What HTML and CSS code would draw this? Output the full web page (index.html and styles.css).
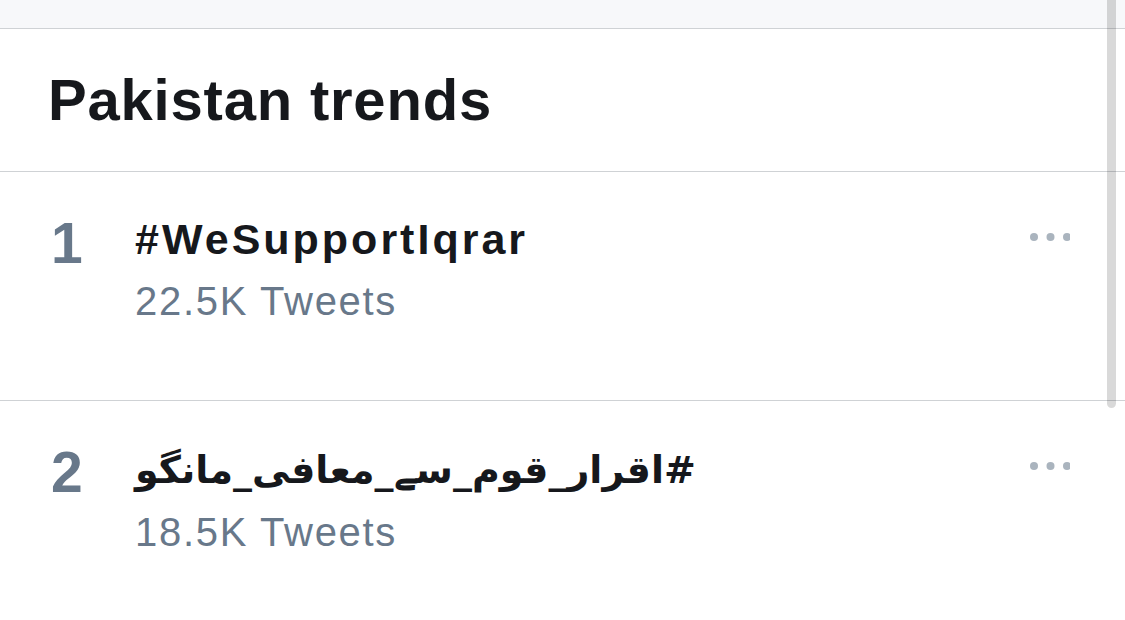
FILE: index.html
```html
<!DOCTYPE html>
<html>
<head>
    <meta charset="utf-8" />
    <title>Pakistan trends</title>
    <link rel="stylesheet" href="styles.css">
</head>
<body>
    <div class="Page">
        <div class="TopBar"></div>
        <div class="Header">
            <h1 class="Title">Pakistan trends</h1>
        </div>
        <div class="Trend">
            <div class="Rank">1</div>
            <div class="Info">
                <div class="Tag">#WeSupportIqrar</div>
                <div class="Count">22.5K Tweets</div>
            </div>
            <svg class="More" width="40" height="8" viewBox="0 0 40 8">
                <circle cx="4" cy="4" r="4" />
                <circle cx="20.5" cy="4" r="4" />
                <circle cx="37" cy="4" r="4" />
            </svg>
        </div>
        <div class="Trend">
            <div class="Rank">2</div>
            <div class="Info">
                <div class="Tag"><span class="Urdu" dir="rtl">#اقرار_قوم_سے_معافی_مانگو</span></div>
                <div class="Count">18.5K Tweets</div>
            </div>
            <svg class="More" width="40" height="8" viewBox="0 0 40 8">
                <circle cx="4" cy="4" r="4" />
                <circle cx="20.5" cy="4" r="4" />
                <circle cx="37" cy="4" r="4" />
            </svg>
        </div>
        <div class="Scrollbar"></div>
    </div>
</body>
</html>
```

FILE: styles.css
```css
body {
    margin: 0;
    background-color: #ffffff;
    font-family: "Liberation Sans", Arial, sans-serif;
    color: #14171a;
}
.Page {
    position: relative;
    height: 620px;
    overflow: hidden;
}
.TopBar {
    height: 28px;
    background-color: #f7f8fa;
    border-bottom: 1px solid #cfd2d5;
}
.Header {
    padding: 37px 48px;
    border-bottom: 1px solid #cfd2d5;
}
.Title {
    margin: 0;
    font-size: 58px;
    line-height: 68px;
    font-weight: bold;
    letter-spacing: 0.8px;
    color: #16181c;
}
.Trend {
    display: flex;
    align-items: flex-start;
    padding: 43px 55px 75px 51px;
    border-bottom: 1px solid #cfd2d5;
}
.Rank {
    width: 84px;
    flex-shrink: 0;
    font-size: 57px;
    line-height: 56px;
    font-weight: bold;
    color: #68788a;
}
.Info {
    flex: 1;
}
.Tag {
    font-size: 43px;
    line-height: 48px;
    font-weight: bold;
    letter-spacing: 3px;
    color: #16181c;
}
.Urdu {
    font-family: "DejaVu Sans", sans-serif;
    font-size: 38px;
    letter-spacing: 0;
}
.Count {
    margin-top: 14px;
    font-size: 40px;
    line-height: 48px;
    letter-spacing: 1.7px;
    color: #68788a;
}
.More {
    margin-top: 18px;
    fill: #aab4be;
}
.Scrollbar {
    position: absolute;
    top: 0;
    right: 9px;
    width: 9px;
    height: 408px;
    border-radius: 0 0 5px 5px;
    background-color: rgba(0, 0, 0, 0.15);
}
```
